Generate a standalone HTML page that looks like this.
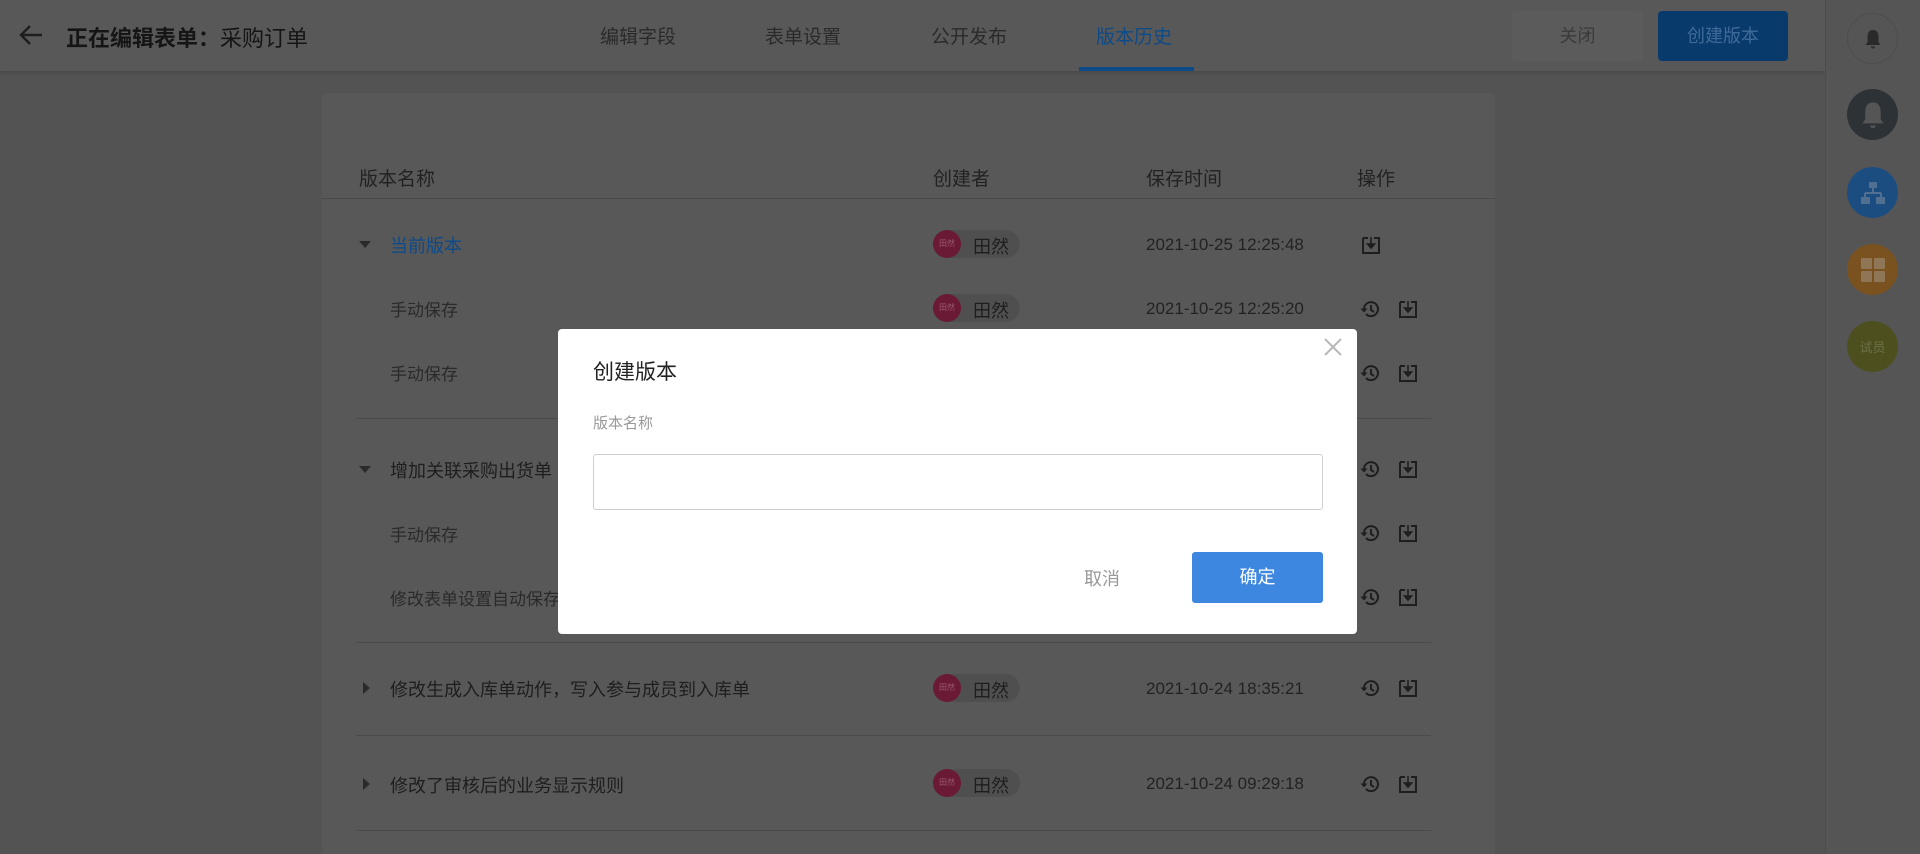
<!DOCTYPE html>
<html><head><meta charset="utf-8"><style>
*{margin:0;padding:0;box-sizing:border-box}
html,body{width:1920px;height:854px;overflow:hidden}
body{background:#535353;font-family:"Liberation Sans","Noto Sans CJK SC",sans-serif;position:relative;color:#1c1c1c}
.a{position:absolute;white-space:nowrap}
.hdr{left:0;top:0;width:1825px;height:71px;background:#585858;box-shadow:0 2px 4px rgba(0,0,0,.15)}
.side{left:1825px;top:0;width:95px;height:854px;background:#555;border-left:1px solid #4c4c4c}
.circ{position:absolute;left:1847px;width:51px;height:51px;border-radius:50%;display:flex;align-items:center;justify-content:center}
.tab{top:22px;font-size:19px;color:#2a2a2a}
.card{left:322px;top:93px;width:1173px;height:761px;background:#585858;border-radius:5px 5px 0 0}
.th{top:164px;font-size:19px;color:#222}
.line{position:absolute;height:1px;background:#4a4a4a}
.rt{font-size:18px;color:#1e1e1e}
.st{font-size:17px;color:#2a2a2a}
.chip{position:absolute;left:933px;width:87px;height:28px;border-radius:14px;background:#4f4f4f}
.chip i{position:absolute;left:0;top:0;width:28px;height:28px;border-radius:50%;background:#6a1a34;font-style:normal;font-size:8px;color:#9a5a6e;text-align:center;line-height:28px}
.chip b{position:absolute;left:40px;top:3px;font-weight:normal;font-size:18px;color:#1e1e1e}
.tm{left:1146px;font-size:17px;color:#222}
.tri{position:absolute;width:0;height:0}
.td{border-left:6px solid transparent;border-right:6px solid transparent;border-top:7px solid #2a2a2a;left:359px}
.tr{border-top:6px solid transparent;border-bottom:6px solid transparent;border-left:7px solid #2a2a2a;left:363px}
svg.ic{position:absolute;width:22px;height:22px}
</style></head><body>
<div class="a hdr"></div>
<svg class="a" style="left:18px;top:23px" width="26" height="24" viewBox="0 0 26 24"><path d="M24 12H3M12 3L3 12l9 9" stroke="#1e1e1e" stroke-width="2.4" fill="none"/></svg>
<div class="a" style="left:66px;top:21px;font-size:22px;color:#151515"><b>正在编辑表单：</b>采购订单</div>
<div class="a tab" style="left:600px">编辑字段</div>
<div class="a tab" style="left:765px">表单设置</div>
<div class="a tab" style="left:931px">公开发布</div>
<div class="a tab" style="left:1096px;color:#0d4a88">版本历史</div>
<div class="a" style="left:1079px;top:67px;width:115px;height:4px;background:#0d4a88"></div>
<div class="a" style="left:1512px;top:11px;width:131px;height:50px;background:#5b5b5b;border-radius:4px;font-size:18px;color:#3a3a3a;text-align:center;line-height:50px">关闭</div>
<div class="a" style="left:1658px;top:11px;width:130px;height:50px;background:#093a6c;border-radius:4px;font-size:18px;color:#3f6a98;text-align:center;line-height:50px">创建版本</div>
<div class="a side"></div>
<div class="circ" style="top:13px;border:1px solid #4d4d4d"><svg width="18" height="20" viewBox="0 0 18 20"><path d="M9 1C5 1 3.5 4 3.5 8v5L1.5 16h15l-2-3V8C14.5 4 13 1 9 1zM7 17.5h4a2 2 0 01-4 0z" fill="#2a2a2a"/></svg></div>
<div class="circ" style="top:89px;background:#2d3237"><svg width="26" height="28" viewBox="0 0 18 20"><path d="M9 1C5 1 3.5 4 3.5 8v5L1.5 16h15l-2-3V8C14.5 4 13 1 9 1zM7 17.5h4a2 2 0 01-4 0z" fill="#555"/></svg></div>
<div class="circ" style="top:167px;background:#1c4d80"><svg width="26" height="26" viewBox="0 0 26 26"><rect x="9" y="2" width="8" height="6" fill="#516f90"/><path d="M13 8v5M5 13h16M5 13v4M21 13v4" stroke="#516f90" stroke-width="2" fill="none"/><rect x="1" y="17" width="9" height="7" fill="#516f90"/><rect x="16" y="17" width="9" height="7" fill="#516f90"/></svg></div>
<div class="circ" style="top:244px;background:#7a5220"><svg width="26" height="26" viewBox="0 0 26 26"><rect x="1" y="1" width="11" height="11" rx="1" fill="#8f7657"/><rect x="14" y="1" width="11" height="11" rx="1" fill="#8f7657"/><rect x="1" y="14" width="11" height="11" rx="1" fill="#8f7657"/><rect x="14" y="14" width="11" height="11" rx="1" fill="#8f7657"/></svg></div>
<div class="circ" style="top:321px;background:#4d4f1f;font-size:13px;color:#6e7046">试员</div>

<div class="a card"></div>
<div class="a th" style="left:359px">版本名称</div>
<div class="a th" style="left:933px">创建者</div>
<div class="a th" style="left:1146px">保存时间</div>
<div class="a th" style="left:1357px">操作</div>
<div class="line" style="left:322px;top:198px;width:1173px"></div>

<div class="tri td" style="top:241px"></div>
<div class="a rt" style="left:390px;top:232px;color:#0d4a88">当前版本</div>
<div class="chip" style="top:230px"><i>田然</i><b>田然</b></div>
<div class="a tm" style="top:235px">2021-10-25 12:25:48</div>

<div class="a st" style="left:390px;top:296px">手动保存</div>
<div class="chip" style="top:294px"><i>田然</i><b>田然</b></div>
<div class="a tm" style="top:299px">2021-10-25 12:25:20</div>

<div class="a st" style="left:390px;top:360px">手动保存</div>

<div class="line" style="left:356px;top:418px;width:1075px"></div>
<div class="tri td" style="top:466px"></div>
<div class="a rt" style="left:390px;top:457px">增加关联采购出货单</div>
<div class="a st" style="left:390px;top:521px">手动保存</div>
<div class="a st" style="left:390px;top:585px">修改表单设置自动保存</div>

<div class="line" style="left:356px;top:642px;width:1075px"></div>
<div class="tri tr" style="top:682px"></div>
<div class="a rt" style="left:390px;top:676px">修改生成入库单动作，写入参与成员到入库单</div>
<div class="chip" style="top:674px"><i>田然</i><b>田然</b></div>
<div class="a tm" style="top:679px">2021-10-24 18:35:21</div>

<div class="line" style="left:356px;top:735px;width:1075px"></div>
<div class="tri tr" style="top:778px"></div>
<div class="a rt" style="left:390px;top:772px">修改了审核后的业务显示规则</div>
<div class="chip" style="top:769px"><i>田然</i><b>田然</b></div>
<div class="a tm" style="top:774px">2021-10-24 09:29:18</div>
<div class="line" style="left:356px;top:830px;width:1075px"></div>

<svg class="ic" style="left:1360px;top:234px" viewBox="0 0 22 22"><path d="M3 4h5M14 4h5v15H3V4" stroke="#1e1e1e" stroke-width="2" fill="none"/><path d="M11 3v10M7.5 10l3.5 4 3.5-4z" stroke="#1e1e1e" stroke-width="1.6" fill="#1e1e1e"/></svg>
<svg width="0" height="0" style="position:absolute"><defs>
<g id="h"><path d="M5 11a7 7 0 1 1 2 5" stroke="#1e1e1e" stroke-width="2" fill="none"/><path d="M1.5 10.5h7L5 14.5z" fill="#1e1e1e"/><path d="M12 7v5l3 2" stroke="#1e1e1e" stroke-width="2" fill="none"/></g>
<g id="d"><path d="M3 4h5M14 4h5v15H3V4" stroke="#1e1e1e" stroke-width="2" fill="none"/><path d="M11 3v10M7.5 10l3.5 4 3.5-4z" stroke="#1e1e1e" stroke-width="1.6" fill="#1e1e1e"/></g></defs></svg>
<svg class="ic" style="left:1359px;top:298px" viewBox="0 0 22 22"><use href="#h"/></svg><svg class="ic" style="left:1397px;top:298px" viewBox="0 0 22 22"><use href="#d"/></svg>
<svg class="ic" style="left:1359px;top:362px" viewBox="0 0 22 22"><use href="#h"/></svg><svg class="ic" style="left:1397px;top:362px" viewBox="0 0 22 22"><use href="#d"/></svg>
<svg class="ic" style="left:1359px;top:458px" viewBox="0 0 22 22"><use href="#h"/></svg><svg class="ic" style="left:1397px;top:458px" viewBox="0 0 22 22"><use href="#d"/></svg>
<svg class="ic" style="left:1359px;top:522px" viewBox="0 0 22 22"><use href="#h"/></svg><svg class="ic" style="left:1397px;top:522px" viewBox="0 0 22 22"><use href="#d"/></svg>
<svg class="ic" style="left:1359px;top:586px" viewBox="0 0 22 22"><use href="#h"/></svg><svg class="ic" style="left:1397px;top:586px" viewBox="0 0 22 22"><use href="#d"/></svg>
<svg class="ic" style="left:1359px;top:677px" viewBox="0 0 22 22"><use href="#h"/></svg><svg class="ic" style="left:1397px;top:677px" viewBox="0 0 22 22"><use href="#d"/></svg>
<svg class="ic" style="left:1359px;top:773px" viewBox="0 0 22 22"><use href="#h"/></svg><svg class="ic" style="left:1397px;top:773px" viewBox="0 0 22 22"><use href="#d"/></svg>

<div class="a" style="left:558px;top:329px;width:799px;height:305px;background:#fff;border-radius:4px"></div>
<svg class="a" style="left:1323px;top:337px" width="20" height="20" viewBox="0 0 20 20"><path d="M2 2l16 16M18 2L2 18" stroke="#b8b8b8" stroke-width="2"/></svg>
<div class="a" style="left:593px;top:356px;font-size:21px;color:#222">创建版本</div>
<div class="a" style="left:593px;top:412px;font-size:15px;color:#999">版本名称</div>
<div class="a" style="left:593px;top:454px;width:730px;height:56px;border:1px solid #cfcfcf;border-radius:3px"></div>
<div class="a" style="left:1084px;top:565px;font-size:18px;color:#999">取消</div>
<div class="a" style="left:1192px;top:552px;width:131px;height:51px;background:#3d87e0;border-radius:3px;color:#fff;font-size:18px;text-align:center;line-height:51px">确定</div>
</body></html>
